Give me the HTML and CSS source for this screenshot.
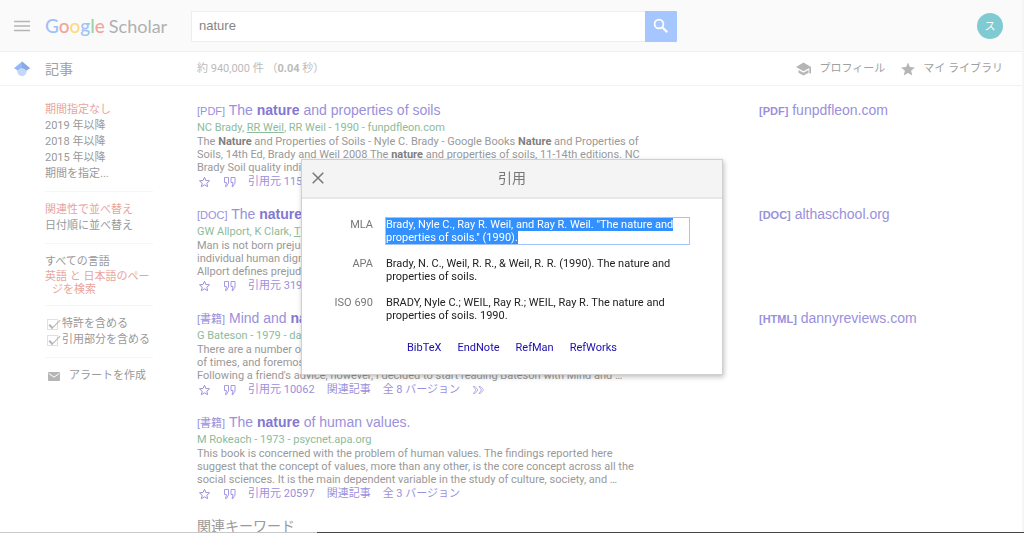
FILE: index.html
```html
<!DOCTYPE html>
<html lang="ja">
<head>
<meta charset="utf-8">
<meta name="viewport" content="width=device-width, initial-scale=1">
<title>nature - Google Scholar</title>
<link rel="stylesheet" href="styles.css">
</head>
<body>
<svg class="defs" aria-hidden="true">
  <symbol id="i-star" viewBox="0 0 12 12"><path d="M6 1.2 7.4 4.5 11 4.8 8.3 7.2 9.1 10.7 6 8.8 2.9 10.7 3.7 7.2 1 4.8 4.6 4.5Z" fill="none" stroke="currentColor"/></symbol>
  <symbol id="i-quote" viewBox="0 0 13 12"><path d="M1.500 1.500h4v5.500L3.500 10.500H2.500L3.500 6.500H1.500ZM8 1.500h4v5.500L10 10.500H9L10 6.500H8Z" fill="none" stroke="currentColor" stroke-width=".9"/></symbol>
  <symbol id="i-more" viewBox="0 0 13 12"><path d="M1.500 2.500H3L6 6 3 9.500H1.500L4 6ZM7 2.500h1.500L11.500 6l-3 3.500H7L9.500 6Z" fill="none" stroke="currentColor" stroke-width=".7"/></symbol>
</svg>
<div class="page">
  <header class="top">
    <button class="icon-btn menu" aria-label="メニュー"><svg width="16" height="12" viewBox="0 0 16 12"><path d="M0 1.500h16M0 6h16M0 10.500h16" stroke="currentColor" stroke-width="1.600"/></svg></button>
    <a class="logo" href="#" aria-label="Google Scholar"><span class="google"><span class="b">G</span><span class="r">o</span><span class="y">o</span><span class="b">g</span><span class="g">l</span><span class="r">e</span></span><span>Scholar</span></a>
    <form class="search">
      <input type="text" value="nature" aria-label="検索">
      <button type="button" aria-label="検索"><svg width="16" height="16" viewBox="0 0 16 16"><circle cx="6" cy="6" r="4.400" fill="none" stroke="currentColor" stroke-width="1.800"/><path d="m9.300 9.300 5 5" stroke="currentColor" stroke-width="2.200"/></svg></button>
    </form>
    <button class="avatar" aria-label="アカウント">ス</button>
  </header>
  <nav class="bar">
    <svg class="cap" width="16" height="16" viewBox="0 0 16 16"><circle cx="8" cy="10.500" r="4.700" fill="#c3d8fb"/><path d="M8 .500 0 7.200 3.800 9.600a4.700 4.700 0 0 1 8.400 0L16 7.200Z" fill="#92b8f8"/><path d="M8 .500v6.500a4.700 4.700 0 0 1 4.200 2.600L16 7.200Z" fill="#8aa9e2"/></svg>
    <h1>記事</h1>
    <p class="count">約 940,000 件 （<b>0.04</b> 秒）</p>
    <a href="#"><svg width="15" height="14" viewBox="0 0 15 14"><path d="M7.500.500 0 5l7.500 4.200L13.300 6v5.500H15V5ZM2.500 8v2.700l5 2.800 5-2.800V8l-5 2.800Z" fill="currentColor"/></svg>プロフィール</a>
    <a href="#"><svg width="14" height="14" viewBox="0 0 14 14"><path d="m7 .500 1.900 4.600 5 .400-3.800 3.200 1.200 4.800L7 11l-4.300 2.500 1.200-4.800L.100 5.500l5-.400Z" fill="currentColor"/></svg>マイ ライブラリ</a>
  </nav>
  <main class="body">
    <aside class="side">
      <ul>
        <li><a class="on" href="#">期間指定なし</a></li>
        <li><a href="#">2019 年以降</a></li>
        <li><a href="#">2018 年以降</a></li>
        <li><a href="#">2015 年以降</a></li>
        <li><a href="#">期間を指定...</a></li>
      </ul>
      <ul>
        <li><a class="on" href="#">関連性で並べ替え</a></li>
        <li><a href="#">日付順に並べ替え</a></li>
      </ul>
      <ul>
        <li><a href="#">すべての言語</a></li>
        <li class="wrap"><a class="on" href="#">英語 と 日本語のペー<br>ジを検索</a></li>
      </ul>
      <ul>
        <li><label><input type="checkbox" checked>特許を含める</label></li>
        <li><label><input type="checkbox" checked>引用部分を含める</label></li>
      </ul>
      <ul>
        <li><a class="alert" href="#"><svg width="12" height="9" viewBox="0 0 12 9"><rect width="12" height="9" rx="1" fill="currentColor"/><path d="m.800 1.500 5.200 3.700 5.200-3.700" fill="none" stroke="#fff"/></svg>アラートを作成</a></li>
      </ul>
    </aside>
    <div class="results">
      <article class="item">
        <div class="text">
          <h3><a href="#"><small>[PDF]</small> The <b>nature</b> and properties of soils</a></h3>
          <p class="by">NC Brady, <a href="#">RR Weil</a>, RR Weil - 1990 - funpdfleon.com</p>
          <p>The <b>Nature</b> and Properties of Soils - Nyle C. Brady - Google Books <b>Nature</b> and Properties of<br>Soils, 14th Ed, Brady and Weil 2008 The <b>nature</b> and properties of soils, 11-14th editions. NC<br>Brady Soil quality indicators</p>
          <p class="acts"><a href="#" aria-label="保存"><svg><use href="#i-star"/></svg></a><a href="#" aria-label="引用"><svg><use href="#i-quote"/></svg></a><a href="#">引用元 115</a></p>
        </div>
        <a class="src" href="#"><small><b>[PDF]</b></small> funpdfleon.com</a>
      </article>
      <article class="item">
        <div class="text">
          <h3><a href="#"><small>[DOC]</small> The <b>nature</b></a></h3>
          <p class="by">GW Allport, K Clark, <a href="#">T</a></p>
          <p>Man is not born prejud<br>individual human digni<br>Allport defines prejudic</p>
          <p class="acts"><a href="#" aria-label="保存"><svg><use href="#i-star"/></svg></a><a href="#" aria-label="引用"><svg><use href="#i-quote"/></svg></a><a href="#">引用元 319</a></p>
        </div>
        <a class="src" href="#"><small><b>[DOC]</b></small> althaschool.org</a>
      </article>
      <article class="item">
        <div class="text">
          <h3><a href="#"><small>[書籍]</small> Mind and <b>nature</b></a></h3>
          <p class="by">G Bateson - 1979 - da</p>
          <p>There are a number of<br>of times, and foremost<br>Following a friend's advice, however, I decided to start reading Bateson with Mind and …</p>
          <p class="acts"><a href="#" aria-label="保存"><svg><use href="#i-star"/></svg></a><a href="#" aria-label="引用"><svg><use href="#i-quote"/></svg></a><a href="#">引用元 10062</a><a href="#">関連記事</a><a href="#">全 8 バージョン</a><a href="#" aria-label="その他"><svg><use href="#i-more"/></svg></a></p>
        </div>
        <a class="src" href="#"><small><b>[HTML]</b></small> dannyreviews.com</a>
      </article>
      <article class="item">
        <div class="text">
          <h3><a href="#"><small>[書籍]</small> The <b>nature</b> of human values.</a></h3>
          <p class="by">M Rokeach - 1973 - psycnet.apa.org</p>
          <p>This book is concerned with the problem of human values. The findings reported here<br>suggest that the concept of values, more than any other, is the core concept across all the<br>social sciences. It is the main dependent variable in the study of culture, society, and …</p>
          <p class="acts"><a href="#" aria-label="保存"><svg><use href="#i-star"/></svg></a><a href="#" aria-label="引用"><svg><use href="#i-quote"/></svg></a><a href="#">引用元 20597</a><a href="#">関連記事</a><a href="#">全 3 バージョン</a></p>
        </div>
      </article>
      <h2>関連キーワード</h2>
    </div>
  </main>
</div>
<div class="edge"></div>
<section class="dialog" role="dialog" aria-labelledby="cite-title">
  <header>
    <button class="icon-btn" aria-label="閉じる"><svg width="12" height="12" viewBox="0 0 12 12"><path d="m.700.700 10.600 10.600M11.300.700.700 11.300" stroke="currentColor" stroke-width="1.500"/></svg></button>
    <h2 id="cite-title">引用</h2>
  </header>
  <table>
    <tr><th scope="row">MLA</th><td><div class="focus"><span>Brady, Nyle C., Ray R. Weil, and Ray R. Weil. "The nature and properties of soils." (1990).</span></div></td></tr>
    <tr><th scope="row">APA</th><td><div>Brady, N. C., Weil, R. R., &amp; Weil, R. R. (1990). The nature and properties of soils.</div></td></tr>
    <tr><th scope="row">ISO 690</th><td><div>BRADY, Nyle C.; WEIL, Ray R.; WEIL, Ray R. The nature and properties of soils. 1990.</div></td></tr>
  </table>
  <nav><a href="#">BibTeX</a><a href="#">EndNote</a><a href="#">RefMan</a><a href="#">RefWorks</a></nav>
</section>
</body>
</html>
```
FILE: styles.css
```css
* { box-sizing: border-box; }
body, h1, h2, h3, p, ul { margin: 0; padding: 0; font-weight: 400; }
html { height: 100%; overflow: hidden; }
body {
  height: 100%;
  overflow: hidden;
  background: #fff;
  color: #999;
  font: 11px/13px Roboto, Arial, "Noto Sans CJK JP", sans-serif;
}
a { color: inherit; text-decoration: none; }
ul { list-style: none; }
button { border: 0; padding: 0; font: inherit; }
svg { display: block; flex: none; }
.defs { position: absolute; width: 0; height: 0; }
.icon-btn { display: flex; background: none; color: #b5b5b5; }
.page { min-height: 100%; border-right: 2px solid #f5f5f5; }

.top {
  display: flex;
  align-items: center;
  height: 52px;
  padding: 1px 19px 0 14px;
  background: #fafafa;
  border-bottom: 1px solid #f0f0f0;
}
.logo { display: flex; align-items: baseline; gap: 4px; width: 146px; margin-left: 15px; font: 18px/24px Lato, sans-serif; color: #b0b0b0; }
.google { font-size: 19px; font-weight: 500; }
.b { color: #9fc1fa; }
.r { color: #f4a39c; }
.y { color: #fcdc80; }
.g { color: #98d3a8; }
.search { display: flex; width: 486px; height: 31px; }
.search input {
  flex: 1;
  min-width: 0;
  padding: 0 7px;
  border: 1px solid #ededed;
  border-right: 0;
  background: #fff;
  color: #858585;
  font: 13px/16px "Liberation Sans", Arial, sans-serif;
}
.search button { display: grid; place-items: center; width: 32px; background: #a5c6ff; color: #fff; border-radius: 0 1px 1px 0; }
.avatar { width: 26px; height: 26px; margin-left: auto; border-radius: 50%; background: #80cbd1; color: #fff; }

.bar { display: flex; align-items: center; height: 34px; padding: 0 19px 0 14px; border-bottom: 1px solid #f3f3f3; color: #a0a0a0; }
.bar h1 { width: 152px; margin-left: 15px; font-size: 14px; line-height: 20px; }
.bar .count { flex: 1; color: #bbb; }
.bar a { display: flex; align-items: center; gap: 8px; margin-left: 16px; }
.bar a svg { color: #b5b5b5; }

.body { display: grid; grid-template-columns: 108px 1fr; column-gap: 44px; padding: 15px 0 0 45px; }
.side { padding-top: 1px; }
.side ul { padding-bottom: 9px; margin-bottom: 10px; border-bottom: 1px solid #f6f6f6; }
.side ul:last-child { border: 0; }
.side li { line-height: 16px; white-space: nowrap; }
.side .on { color: #e9a49d; }
.side .wrap { line-height: 13px; padding-left: 7px; text-indent: -7px; }
.side label { display: flex; align-items: center; gap: 4px; }
.side input {
  appearance: none;
  width: 11px;
  height: 11px;
  margin: 0 0 0 2px;
  border: 1px solid #e0e0e0;
  background: #fff;
  position: relative;
}
.side input:checked::after {
  content: "";
  position: absolute;
  left: 4px;
  top: -3px;
  width: 4px;
  height: 10px;
  border: solid #b5b5b5;
  border-width: 0 1px 2px 0;
  transform: rotate(45deg);
}
.alert { display: flex; align-items: center; gap: 9px; padding-left: 3px; }
.alert svg { color: #b5b5b5; }

.item { display: grid; grid-template-columns: 430px 1fr; column-gap: 132px; min-height: 104px; }
.text { white-space: nowrap; min-width: 0; }
.text h3, .src { font-family: "Liberation Sans", Arial, "Noto Sans CJK JP", sans-serif; font-size: 14px; line-height: 19px; color: #9a90dc; }
small { font-size: 11px; }
.text b { font-weight: 700; color: #808080; }
.text h3 b { color: #8378d2; }
.text .by { line-height: 14px; color: #8dbb9c; }
.by a { text-decoration: underline; }
.acts { display: flex; align-items: center; gap: 12px; line-height: 16px; padding-left: 1px; color: #9a90dc; }
.acts svg { width: 13px; height: 12px; }
.results h2 { font-size: 14px; line-height: 18px; }
.edge { position: fixed; inset: auto 0 0 0; height: 1px; background: linear-gradient(90deg, #c8c8c8 31%, #444 31%); }

.dialog {
  position: fixed;
  top: 159px;
  left: 50%;
  width: 422px;
  transform: translateX(-50%);
  background: #fff;
  border: 1px solid #d0d0d0;
  box-shadow: 1px 2px 5px rgba(0, 0, 0, .25);
  color: #222;
}
.dialog header { display: grid; grid-template-columns: 12px 1fr 12px; align-items: center; height: 39px; padding: 0 10px 1px; background: #f4f4f4; border-bottom: 2px solid #e8e8e8; }
.dialog header button { color: #777; }
.dialog h2 { text-align: center; font-size: 14px; line-height: 20px; color: #777; }
.dialog table { margin: 19px 33px 0 23px; border-collapse: collapse; }
.dialog th, .dialog td { padding: 0 0 13px; vertical-align: top; text-align: left; }
.dialog th { width: 61px; padding-right: 13px; text-align: right; font-weight: 400; color: #777; white-space: nowrap; }
.dialog td { width: 304px; }
.focus { outline: 1px solid #a3c4fb; }
.focus span { background: #3390ff; color: #fff; }
.dialog nav { display: flex; justify-content: center; gap: 16px; padding: 6px 0 20px; color: #1a0dab; }
```
